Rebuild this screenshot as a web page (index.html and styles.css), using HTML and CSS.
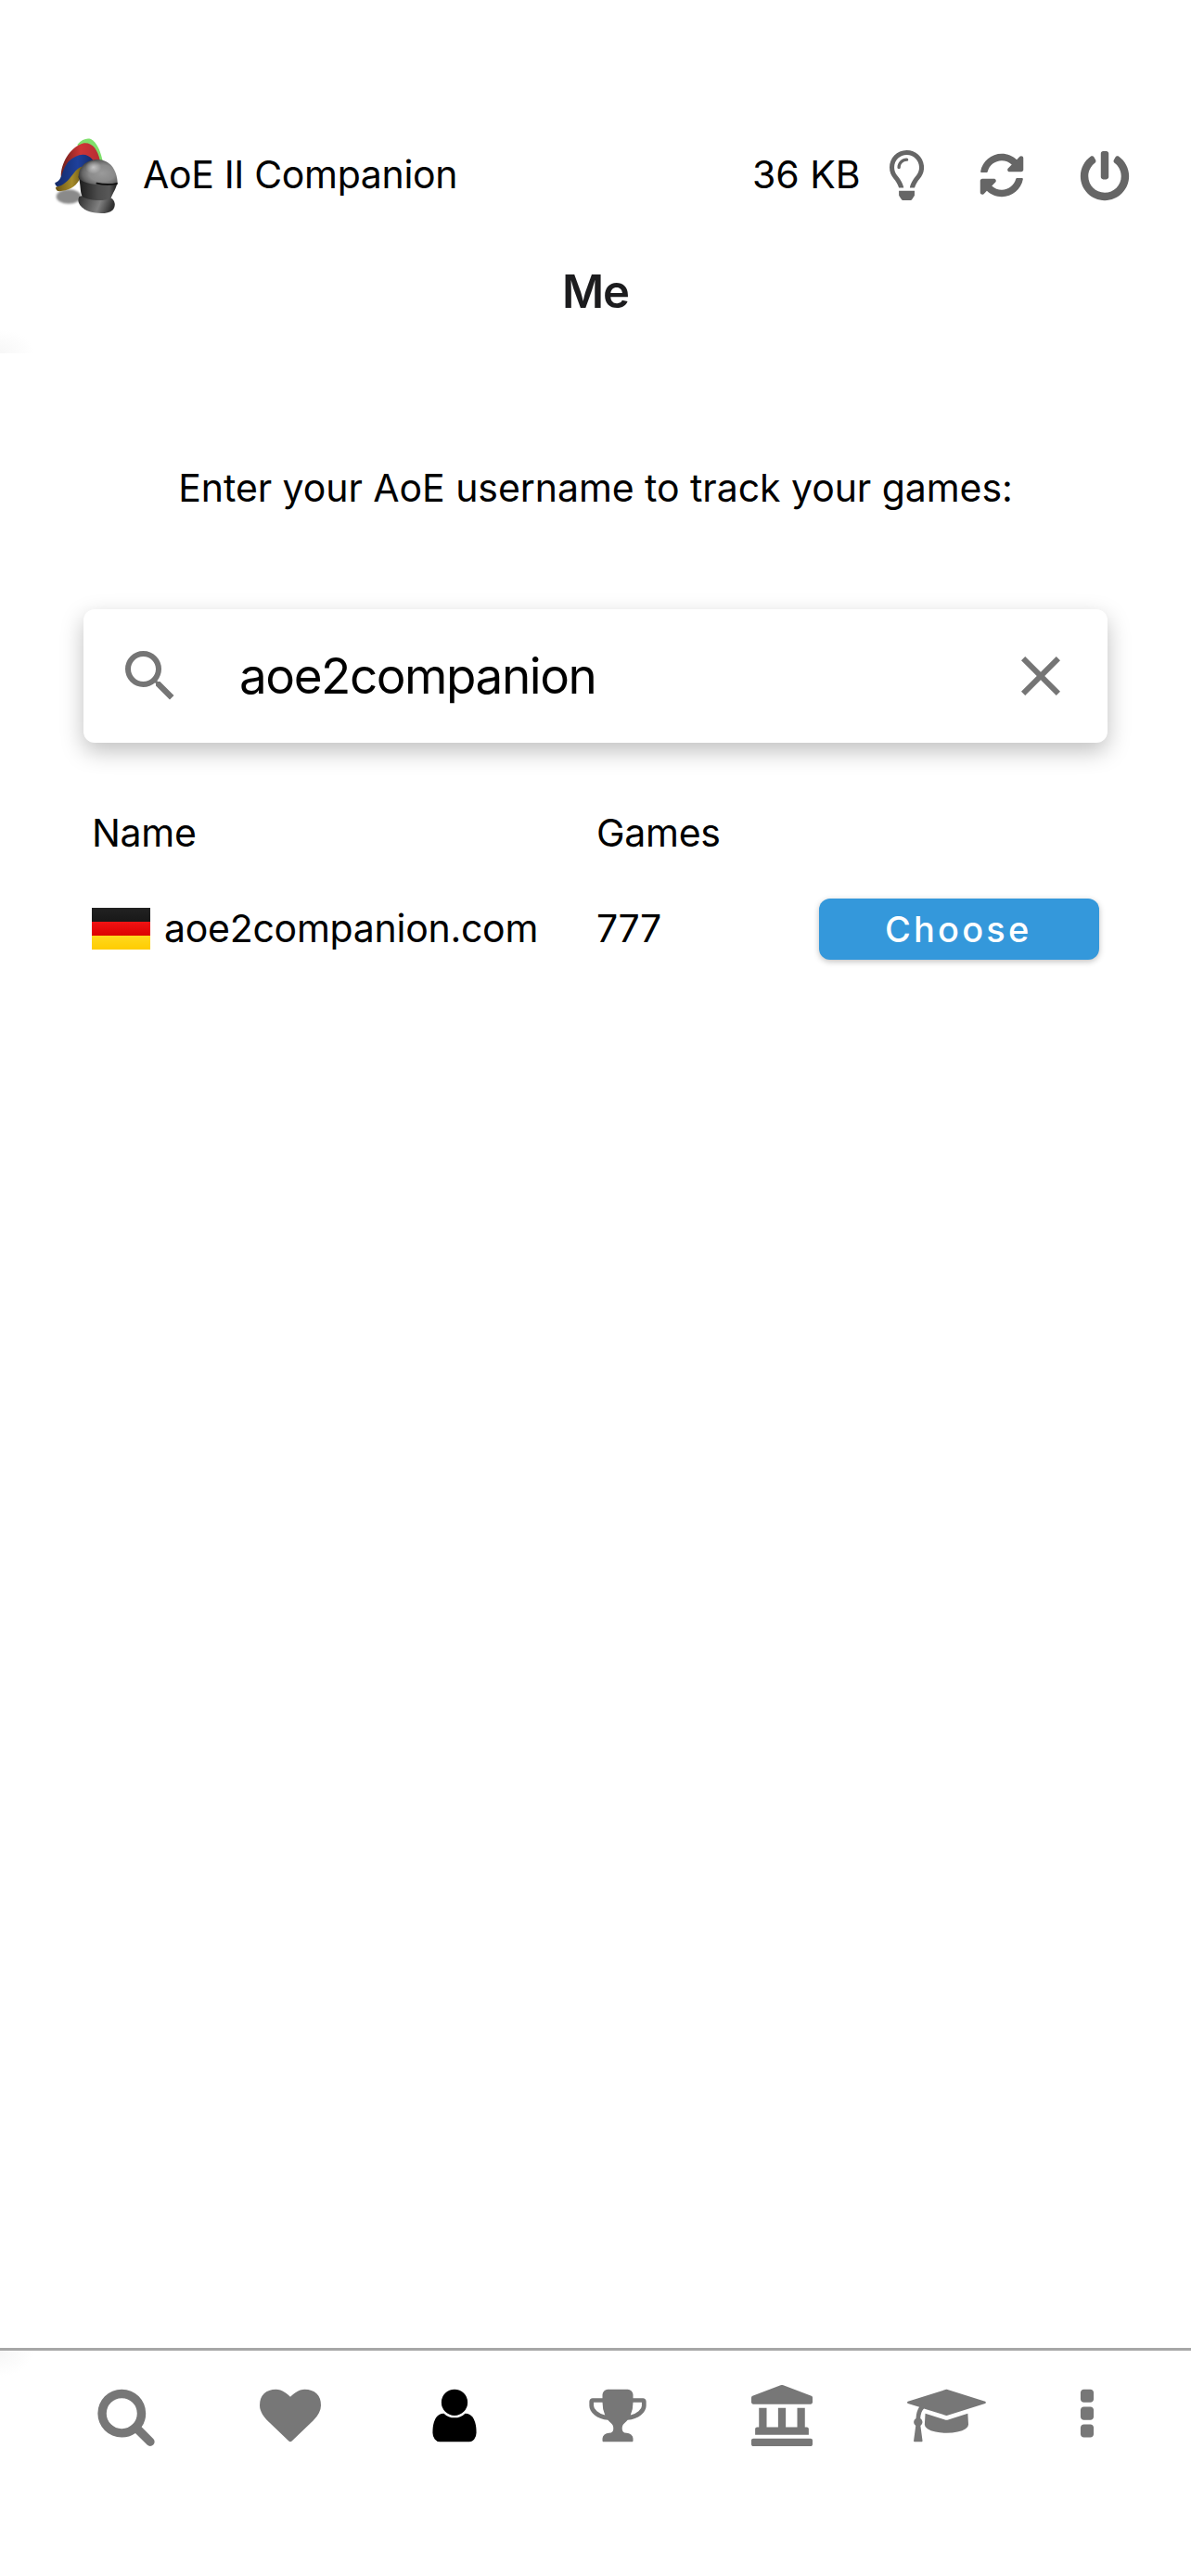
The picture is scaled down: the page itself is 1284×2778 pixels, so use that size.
FILE: index.html
```html
<!DOCTYPE html>
<html lang="en">
<head>
<meta charset="utf-8">
<title>AoE II Companion</title>
<link rel="stylesheet" href="styles.css">
</head>
<body>
<div class="app">
  <header class="topbar">
    <svg class="logo" viewBox="0 0 270 285" aria-hidden="true">
      <defs>
        <radialGradient id="dome" cx="0.6" cy="0.55" r="0.66">
          <stop offset="0" stop-color="#9a9a9a"/><stop offset="0.5" stop-color="#8a8a8a"/><stop offset="0.75" stop-color="#666"/><stop offset="1" stop-color="#262626"/>
        </radialGradient>
        <radialGradient id="shine" cx="0.5" cy="0.5" r="0.5">
          <stop offset="0" stop-color="#fff" stop-opacity="0.5"/><stop offset="1" stop-color="#fff" stop-opacity="0"/>
        </radialGradient>
        <linearGradient id="visor" x1="0" x2="1">
          <stop offset="0" stop-color="#1a1a1a"/><stop offset="0.5" stop-color="#4c4c4c"/><stop offset="0.8" stop-color="#585858"/><stop offset="1" stop-color="#1c1c1c"/>
        </linearGradient>
        <linearGradient id="collar" x1="0" x2="1" y2="0.2">
          <stop offset="0" stop-color="#2c2c2c"/><stop offset="0.65" stop-color="#808080"/><stop offset="1" stop-color="#333"/>
        </linearGradient>
        <linearGradient id="red" x1="0" x2="1"><stop offset="0" stop-color="#6b1f1c"/><stop offset="0.5" stop-color="#cf3535"/><stop offset="1" stop-color="#b52d35"/></linearGradient>
        <linearGradient id="blue" x1="0" x2="1"><stop offset="0" stop-color="#142a66"/><stop offset="0.6" stop-color="#1e409c"/><stop offset="1" stop-color="#152b69"/></linearGradient>
        <linearGradient id="gold" x1="0" x2="1"><stop offset="0" stop-color="#6a5212"/><stop offset="0.6" stop-color="#a68c2a"/><stop offset="1" stop-color="#6a5615"/></linearGradient>
        <filter id="soft"><feGaussianBlur stdDeviation="3"/></filter>
      </defs>
      <ellipse cx="72" cy="213" rx="40" ry="23" fill="#8a8a8a" filter="url(#soft)"/>
      <path d="M100 45C115 28 130 23 144 27C163 38 174 62 182 98L150 96Z" fill="#7fe06c"/>
      <path d="M47 145C50 95 82 50 122 40C150 38 166 62 174 98L108 120L50 170Z" fill="url(#red)"/>
      <path d="M30 183C60 176 66 128 96 118L118 117L106 160C94 184 62 198 36 195Q29 190 30 183Z" fill="url(#gold)"/>
      <path d="M28 168C54 160 47 128 72 99C100 73 130 68 151 95L118 116C88 118 80 170 36 181Q27 176 28 168Z" fill="url(#blue)"/>
      <path d="M106 213C120 206 190 208 213 220C224 232 224 246 214 257C200 270 166 269 140 262C112 252 96 232 106 213Z" fill="url(#collar)"/>
      <path d="M104 148C112 180 108 196 116 213C140 228 190 228 209 218C214 202 228 184 229 167L170 160Z" fill="url(#visor)"/>
      <path d="M104 152C102 118 130 93 166 93C204 94 228 124 230 168C200 177 125 180 104 152Z" fill="url(#dome)"/>
      <ellipse cx="152" cy="118" rx="26" ry="22" fill="url(#shine)"/>
      <path d="M163 170Q195 177 229 171" fill="none" stroke="#0c0c0c" stroke-width="5" stroke-linecap="round"/>
    </svg>
    <span class="brand">AoE II Companion</span>
    <span class="usage">36 KB</span>
    <svg class="bulb" viewBox="0 0 352 512"><path d="M176 80c-52.94 0-96 43.06-96 96 0 8.84 7.16 16 16 16s16-7.16 16-16c0-35.3 28.72-64 64-64 8.84 0 16-7.16 16-16s-7.16-16-16-16zM96.06 459.17c0 3.15.93 6.22 2.68 8.84l24.51 36.84c2.97 4.46 7.97 7.14 13.32 7.14h78.85c5.36 0 10.36-2.68 13.32-7.14l24.51-36.84c1.74-2.62 2.67-5.7 2.68-8.84l.05-43.18H96.02l.04 43.18zM176 0C73.72 0 0 82.97 0 176c0 44.37 16.45 84.85 43.56 115.78 16.64 18.99 42.74 58.8 52.42 92.16v.06h48v-.12c-.01-4.77-.72-9.51-2.15-14.07-5.59-17.81-22.82-64.86-62.17-109.67-20.54-23.43-31.52-53.15-31.61-84.14-.2-73.64 59.67-128 127.95-128 70.58 0 128 57.42 128 128 0 30.97-11.24 60.85-31.65 84.14-39.11 44.61-56.42 91.47-62.1 109.46a47.507 47.507 0 0 0-2.22 14.3v.1h48v-.05c9.68-33.37 35.78-73.18 52.42-92.16C335.55 260.85 352 220.37 352 176 352 78.8 273.2 0 176 0z"/></svg>
    <svg class="sync" viewBox="0 0 512 512"><path d="M370.72 133.28C339.458 104.008 298.888 87.962 255.848 88c-77.458.068-144.328 53.178-162.791 126.85-1.344 5.363-6.122 9.15-11.651 9.15H24.103c-7.498 0-13.194-6.807-11.807-14.176C33.933 94.924 134.813 8 256 8c66.448 0 126.791 26.136 171.315 68.685L463.03 40.97C478.149 25.851 504 36.559 504 57.941V192c0 13.255-10.745 24-24 24H345.941c-21.382 0-32.09-25.851-16.971-40.971l41.75-41.749zM32 296h134.059c21.382 0 32.09 25.851 16.971 40.971l-41.75 41.75c31.262 29.273 71.835 45.319 114.876 45.28 77.418-.07 144.315-53.144 162.787-126.849 1.344-5.363 6.122-9.15 11.651-9.15h57.304c7.498 0 13.194 6.807 11.807 14.176C478.067 417.076 377.187 504 256 504c-66.448 0-126.791-26.136-171.315-68.685L48.97 471.03C33.851 486.149 8 475.441 8 454.059V320c0-13.255 10.745-24 24-24z"/></svg>
    <svg class="power" viewBox="0 0 512 512"><path d="M400 54.1c63 45 104 118.6 104 201.9 0 136.8-110.8 247.7-247.5 248C120 504.3 8.2 393 8 256.4 7.9 173.1 48.9 99.3 111.8 54.2c11.7-8.3 28-4.8 35 7.7L162.6 90c5.9 10.5 3.1 23.8-6.6 31-41.5 30.8-68 79.6-68 134.9-.1 92.3 74.5 168.1 168 168.1 91.6 0 168.6-74.2 168-169.1-.3-51.8-24.7-101.8-68.1-134-9.7-7.2-12.4-20.5-6.5-30.9l15.8-28.1c7-12.4 23.2-16.1 34.8-7.8zM296 264V24c0-13.3-10.7-24-24-24h-32c-13.3 0-24 10.7-24 24v240c0 13.3 10.7 24 24 24h32c13.3 0 24-10.7 24-24z"/></svg>
  </header>
  <h1 class="title">Me</h1>
  <main class="content">
    <p class="prompt">Enter your AoE username to track your games:</p>
    <div class="search">
      <svg class="search-icon" viewBox="0 0 24 24"><path d="M9.5 3A6.5 6.5 0 0 1 16 9.5c0 1.61-.59 3.09-1.56 4.23l.27.27h.79l5 5-1.5 1.5-5-5v-.79l-.27-.27A6.516 6.516 0 0 1 9.5 16 6.5 6.5 0 0 1 3 9.5 6.5 6.5 0 0 1 9.5 3m0 2C7 5 5 7 5 9.5S7 14 9.5 14 14 12 14 9.5 12 5 9.5 5z"/></svg>
      <span class="query">aoe2companion</span>
      <svg class="search-icon" viewBox="0 0 24 24"><path d="M19 6.41 17.59 5 12 10.59 6.41 5 5 6.41 10.59 12 5 17.59 6.41 19 12 13.41 17.59 19 19 17.59 13.41 12z"/></svg>
    </div>
    <div class="row head">
      <span class="name">Name</span>
      <span class="games">Games</span>
    </div>
    <div class="row">
      <span class="player"><i class="flag"></i><span class="handle">aoe2companion.com</span></span>
      <span class="count">777</span>
      <button class="choose">Choose</button>
    </div>
  </main>
  <nav class="tabs">
    <a><svg viewBox="0 0 1792 1792"><path d="M1216 832q0-185-131.5-316.5t-316.5-131.5-316.5 131.5-131.5 316.5 131.5 316.5 316.5 131.5 316.5-131.5 131.5-316.5zm512 832q0 52-38 90t-90 38q-54 0-90-38l-343-342q-179 124-399 124-143 0-273.5-55.5t-225-150-150-225-55.5-273.5 55.5-273.5 150-225 225-150 273.5-55.5 273.5 55.5 225 150 150 225 55.5 273.5q0 220-124 399l343 343q37 37 37 90z"/></svg></a>
    <a><svg viewBox="0 0 1792 1792"><path d="M896 1664q-26 0-44-18l-624-602q-10-8-27.5-26t-55.5-65.5-68-97.5-53.5-121-23.5-138q0-220 127-344t351-124q62 0 126.5 21.5t120 58 95.5 68.5 76 68q36-36 76-68t95.5-68.5 120-58 126.5-21.5q224 0 351 124t127 344q0 221-229 450l-623 600q-18 18-44 18z"/></svg></a>
    <a class="active"><svg viewBox="0 0 1792 1792"><path d="M1536 1399q0 109-62.5 187t-150.5 78h-854q-88 0-150.5-78t-62.5-187q0-85 8.5-160.5t31.5-152 58.5-131 94-89 134.5-34.5q131 128 313 128t313-128q76 0 134.5 34.5t94 89 58.5 131 31.5 152 8.5 160.5zm-256-887q0 159-112.5 271.5t-271.5 112.5-271.5-112.5-112.5-271.5 112.5-271.5 271.5-112.5 271.5 112.5 112.5 271.5z"/></svg></a>
    <a><svg viewBox="0 0 1792 1792"><path d="M522 883q-74-162-74-371h-256v96q0 78 94.5 162t235.5 113zm1078-275v-96h-256q0 209-74 371 141-29 235.5-113t94.5-162zm128-128v128q0 71-41.5 143t-112 130-173 97.5-215.5 44.5q-42 54-95 95-38 34-52.5 72.5t-14.5 89.5q0 54 30.5 91t97.5 37q75 0 133.5 45.5t58.5 114.5v64q0 14-9 23t-23 9h-832q-14 0-23-9t-9-23v-64q0-69 58.5-114.5t133.5-45.5q67 0 97.5-37t30.5-91q0-51-14.5-89.5t-52.5-72.5q-53-41-95-95-113-5-215.5-44.5t-173-97.5-112-130-41.5-143v-128q0-40 28-68t68-28h288v-96q0-66 47-113t113-47h576q66 0 113 47t47 113v96h288q40 0 68 28t28 68z"/></svg></a>
    <a><svg viewBox="0 0 512 512"><path d="M501.62 92.11L267.24 2.04a31.958 31.958 0 0 0-22.47 0L10.38 92.11A16.001 16.001 0 0 0 0 107.09V144c0 8.84 7.16 16 16 16h480c8.84 0 16-7.16 16-16v-36.91c0-6.67-4.14-12.64-10.38-14.98zM64 192v160H48c-8.84 0-16 7.16-16 16v48h448v-48c0-8.84-7.16-16-16-16h-16V192h-64v160h-96V192h-64v160h-96V192H64zm432 256H16c-8.84 0-16 7.16-16 16v32c0 8.84 7.16 16 16 16h480c8.84 0 16-7.16 16-16v-32c0-8.84-7.16-16-16-16z"/></svg></a>
    <a><svg class="wide" viewBox="0 0 2304 1792"><path d="M1774 836l18 316q4 69-82 128t-235 93.5-323 34.5-323-34.5-235-93.5-82-128l18-316 574 181q22 7 48 7t48-7zm530-324q0 23-22 31l-1120 352q-4 1-10 1t-10-1l-652-206q-43 34-71 111.5t-34 178.5q63 36 63 109 0 69-58 107l58 433q2 14-8 25-9 11-24 11h-192q-15 0-24-11-10-11-8-25l58-433q-58-38-58-107 0-73 65-111 11-207 98-330l-333-104q-22-8-22-31t22-31l1120-352q4-1 10-1t10 1l1120 352q22 8 22 31z"/></svg></a>
    <a class="more"><svg viewBox="0 0 1792 1792"><path d="M1088 1248v192q0 40-28 68t-68 28h-192q-40 0-68-28t-28-68v-192q0-40 28-68t68-28h192q40 0 68 28t28 68zm0-512v192q0 40-28 68t-68 28h-192q-40 0-68-28t-28-68v-192q0-40 28-68t68-28h192q40 0 68 28t28 68zm0-512v192q0 40-28 68t-68 28h-192q-40 0-68-28t-28-68v-192q0-40 28-68t68-28h192q40 0 68 28t28 68z"/></svg></a>
  </nav>
</div>
</body>
</html>
```
FILE: styles.css
```css
* { box-sizing: border-box; }
body { margin: 0; background: #fff; color: #000; font-family: Inter, "Liberation Sans", sans-serif; font-size: 41px; }
.app { display: flex; flex-direction: column; width: 1284px; height: 2778px; }
svg { display: block; flex: none; fill: #666; }

.topbar { display: flex; align-items: center; height: 96px; margin-top: 140px; padding-left: 50px; white-space: nowrap; }
.logo { width: 90px; height: 95px; }
.brand { margin-left: 14px; width: 657px; letter-spacing: -.34px; }
.usage { width: 148px; }
.bulb { width: 37.1px; height: 54px; margin-top: 2px; }
.sync { width: 48px; height: 48px; margin-left: 60px; margin-top: 1px; }
.power { width: 54px; height: 54px; margin-left: 60px; margin-top: 3px; }

.title { margin: 0; height: 145px; padding-top: 45px; font-size: 49px; line-height: 68px; font-weight: 600; letter-spacing: -1px; text-align: center; color: #1c1c1e;
  background: radial-gradient(ellipse 36px 26px at 0 100%, #f7f7f7, #fff) no-repeat; }

.content { flex: 1; padding: 120px 90px 0; }
.prompt { margin: 0; line-height: 50px; text-align: center; white-space: nowrap; letter-spacing: -.06px; }
.search { display: flex; align-items: center; height: 144px; margin-top: 106px; padding: 0 36px; border-radius: 12px; background: #fff;
  box-shadow: 0 9px 24px rgba(0, 0, 0, .25); }
.search-icon { width: 72px; height: 72px; fill: #757575; }
.query { flex: 1; margin-left: 60px; font-size: 53px; letter-spacing: -1.45px; }
.row { display: flex; align-items: center; height: 66px; margin-top: 37px; padding: 0 9px; }
.head { margin-top: 64px; letter-spacing: -.3px; }
.name, .player { width: 544px; }
.player { display: flex; align-items: center; gap: 15px; letter-spacing: -.27px; }
.flag { width: 63px; height: 45px; background: linear-gradient(#222, #181818 33.3%, #f01414 33.3%, #dc0000 66.6%, #ffd91e 66.6%, #fc0); }
.count { width: 240px; letter-spacing: -.5px; }
.choose { width: 302px; height: 66px; margin-top: 2px; padding: 0; border: 0; border-radius: 12px; background: #3498db; color: #fff;
  font: 500 38px Inter, sans-serif; letter-spacing: 3.2px; text-indent: -1.5px; box-shadow: 0 2px 6px rgba(0, 0, 0, .25); }

.tabs { display: flex; height: 246px; padding: 37px 0 0 47.7px; border-top: 3px solid #a7a7a7;
  background: radial-gradient(ellipse 36px 28px at 0 0, #f6f6f6, #fff) no-repeat; }
.tabs a { flex: 0 0 176.8px; display: flex; justify-content: center; }
.tabs .more { flex-basis: 128px; }
.tabs svg { width: 66px; height: 66px; fill: #777; }
.tabs .wide { width: 84.9px; }
.tabs .active svg { fill: #000; }
```
